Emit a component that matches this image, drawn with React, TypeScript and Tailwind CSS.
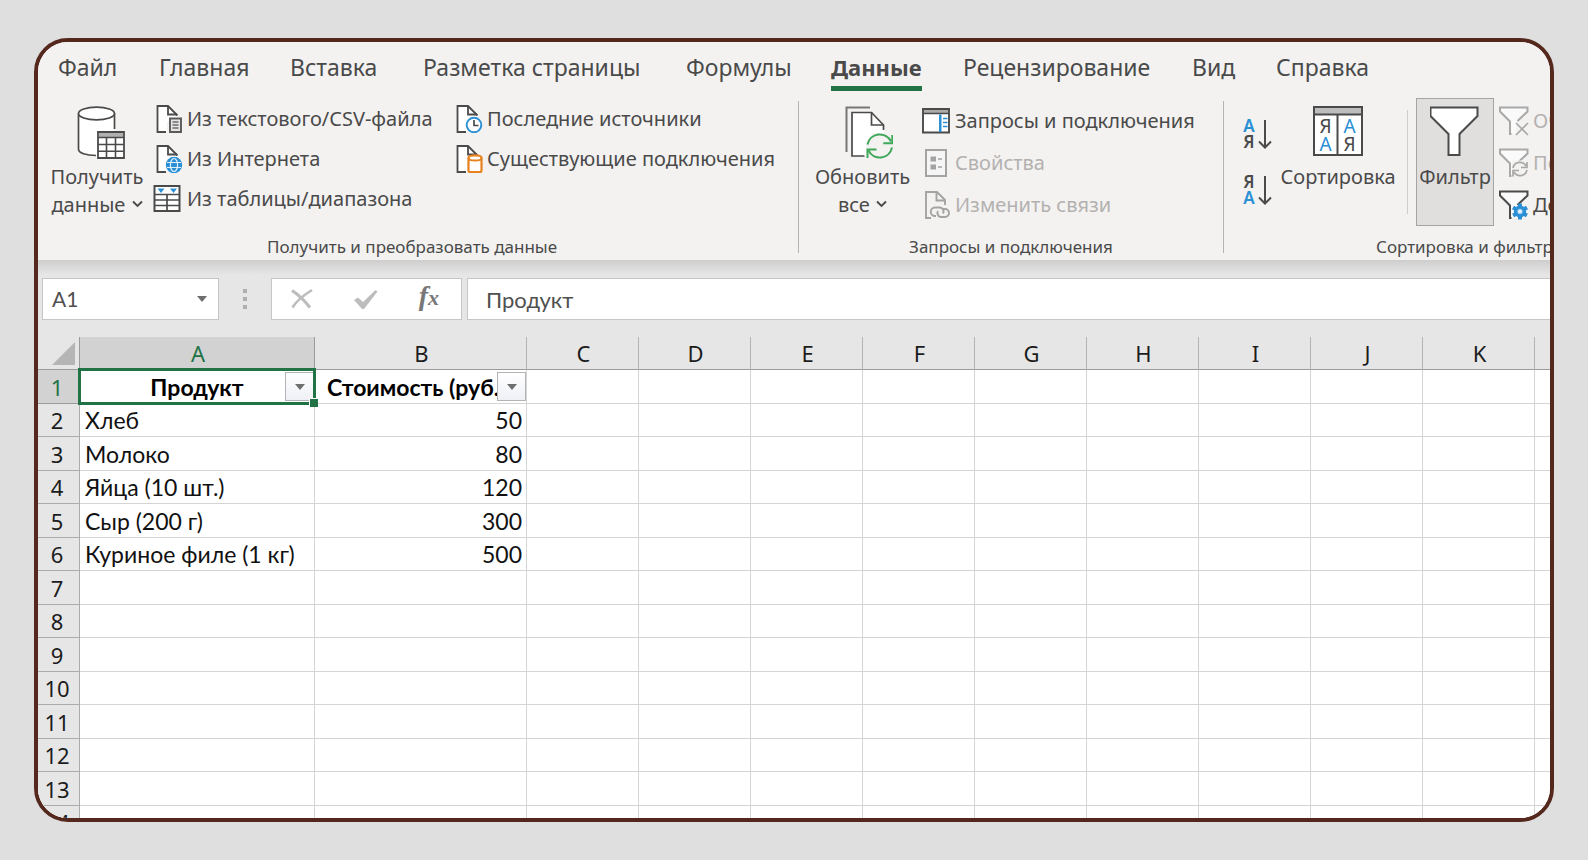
import type { ReactNode } from 'react';

const tabs = [
  { name: 'Файл', width: 'w-[101px]' },
  { name: 'Главная', width: 'w-[131px]' },
  { name: 'Вставка', width: 'w-[133px]' },
  { name: 'Разметка страницы', width: 'w-[263px]' },
  { name: 'Формулы', width: 'w-[145px]' },
  { name: 'Данные', width: 'w-[132px]', active: true },
  { name: 'Рецензирование', width: 'w-[229px]' },
  { name: 'Вид', width: 'w-[84px]' },
  { name: 'Справка', width: 'w-[100px]' },
];

const columns = ['C', 'D', 'E', 'F', 'G', 'H', 'I', 'J', 'K'];

const products: [string, number][] = [
  ['Хлеб', 50],
  ['Молоко', 80],
  ['Яйца (10 шт.)', 120],
  ['Сыр (200 г)', 300],
  ['Куриное филе (1 кг)', 500],
];

const bodyRows = Array.from({ length: 13 }, (_, i) => i + 2);

const DARK = '#4a4a4a';
const BLUE = '#2b8fd6';

function PageShape({ color = DARK }: { color?: string }) {
  return (
    <g fill="none" stroke={color} strokeWidth="1.8">
      <path d="M1.500 1h10l10 10v3H14l-3 4v9H1.500z" fill="#fff" stroke="none" />
      <path d="M10 27H1.500V1h10.500l9.500 9.500" />
      <path d="M12 1v8.500h9" />
    </g>
  );
}

function DatabaseTableIcon() {
  return (
    <svg width="56" height="54" viewBox="-8 0 56 54" fill="none" aria-hidden="true">
      <path d="M1.5 8v36c0 3.5 8 6 17 6h2V26h17V8z" fill="#fff" />
      <path d="M19 49.500C9 49.500 1.500 47 1.500 43V7.500M37.500 7.500V23" stroke={DARK} strokeWidth="1.7" />
      <ellipse cx="19.500" cy="7.500" rx="18" ry="6.300" fill="#fff" stroke={DARK} strokeWidth="1.700" />
      <path d="M21 26h26v26H21z" fill="#fff" stroke={DARK} strokeWidth="1.800" />
      <path d="M22 27h24v4H22z" fill="#b0b0b0" />
      <path d="M21 31.500h26M21 38.500h26M21 45.300h26M29.500 31v21M38.500 31v21" stroke={DARK} strokeWidth="1.600" />
    </svg>
  );
}

function TextFileIcon() {
  return (
    <svg width="28" height="28" viewBox="0 0 28 28" fill="none" aria-hidden="true">
      <PageShape />
      <path d="M14 13.500h11v13.500H14z" fill="#e4e4e4" stroke="#5a5a5a" strokeWidth="1.900" />
      <path d="M16.500 17h6M16.500 20h6M16.500 23h6" stroke="#6c6c6c" strokeWidth="1.400" />
    </svg>
  );
}

function WebFileIcon() {
  return (
    <svg width="28" height="28" viewBox="0 0 28 28" fill="none" aria-hidden="true">
      <PageShape />
      <circle cx="18" cy="20" r="8.200" fill={BLUE} />
      <path d="M11 17.500h14M11 22.500h14" stroke="#e3f1fb" strokeWidth="1.200" />
      <ellipse cx="18" cy="20" rx="3.600" ry="6.500" stroke="#e3f1fb" strokeWidth="1.200" />
    </svg>
  );
}

function TableRangeIcon() {
  return (
    <svg className="overflow-visible" width="28" height="28" viewBox="2 0 28 28" fill="none" aria-hidden="true">
      <path d="M0.500 1h25v25h-25z" fill="#fff" stroke={DARK} strokeWidth="2" />
      <path d="M0.500 9.500h25M0.500 15h25M0.500 20.500h25M13 9v17" stroke={DARK} strokeWidth="1.700" />
      <path d="M3.500 3.500h7L7 8zM16 3.500h7L19.500 8z" fill={BLUE} />
    </svg>
  );
}

function RecentIcon() {
  return (
    <svg width="28" height="28" viewBox="0 0 28 28" fill="none" aria-hidden="true">
      <PageShape />
      <circle cx="18" cy="20" r="7.300" fill="#fff" stroke={BLUE} strokeWidth="1.900" />
      <path d="M18 15v5.500h4.500" stroke={DARK} strokeWidth="1.700" />
    </svg>
  );
}

function ConnectionIcon() {
  return (
    <svg width="28" height="28" viewBox="0 0 28 28" fill="none" aria-hidden="true">
      <PageShape />
      <path d="M12.500 13c0-3.400 13-3.400 13 0v12.500q0 1.500-1.500 1.500h-10q-1.500 0-1.500-1.500z" fill="#fff" stroke="#e8821e" strokeWidth="2.200" />
      <path d="M12.500 13c0 3.400 13 3.400 13 0" stroke="#e8821e" strokeWidth="2" />
    </svg>
  );
}

function RefreshIcon() {
  return (
    <svg width="60" height="54" viewBox="-12 0 60 54" fill="none" aria-hidden="true">
      <path d="M1.500 46V1.500H25" stroke="#777" strokeWidth="2" />
      <path d="M7 7h19l13 13v7H28l-7 9v14H7z" fill="#fff" />
      <path d="M19.500 50H7V6.500h19.500L38.500 19v5" stroke={DARK} strokeWidth="1.700" />
      <path d="M26.500 6.500V19h12.500" stroke={DARK} strokeWidth="1.700" />
      <g stroke="#3fa859" strokeWidth="2">
        <path d="M22.500 38.500a12.500 12.500 0 0 1 23.500-3M47 41.500a12.500 12.500 0 0 1-23.500 3" />
        <path d="M47.300 29v8.300h-9M22.500 52v-8.500h9" />
      </g>
    </svg>
  );
}

function QueriesIcon() {
  return (
    <svg width="28" height="28" viewBox="0 0 28 28" fill="none" aria-hidden="true">
      <path d="M1 2h26v23.500H1z" fill="#fff" stroke={DARK} strokeWidth="1.900" />
      <path d="M2 3h24v3H2z" fill="#aaa" />
      <path d="M1 6.500h26" stroke={DARK} strokeWidth="1.400" />
      <path d="M17 7.500h2.500V25H17z" fill={BLUE} />
      <path d="M21 11.500h4.500M21 15.500h4.500M21 19.500h4.500" stroke={BLUE} strokeWidth="1.700" />
    </svg>
  );
}

function PropertiesIcon() {
  return (
    <svg width="28" height="28" viewBox="0 0 28 28" fill="none" aria-hidden="true">
      <path d="M4 1h20v26H4z" fill="#f5f5f5" stroke="#a3a3a3" strokeWidth="2" />
      <path d="M8.500 7.500h5.500v5H8.500zM8.500 15.500h5.500v5H8.500z" fill="#a3a3a3" />
      <path d="M16 10h4M16 18h4" stroke="#a3a3a3" strokeWidth="1.500" />
    </svg>
  );
}

function EditLinksIcon() {
  return (
    <svg width="28" height="28" viewBox="0 0 28 28" fill="none" aria-hidden="true">
      <g stroke="#a3a3a3" strokeWidth="1.900">
        <path d="M9 27H4V1h11l8 8v5" />
        <path d="M14.500 1v8.500H23" />
        <path d="M14 25h-1a4 4 0 0 1 0-8.500h5a4 4 0 0 1 3 6" />
        <path d="M21 18h2a4 4 0 0 1 0 8h-4.500a4 4 0 0 1-2.500-6" />
      </g>
    </svg>
  );
}

function SortLettersIcon({ reversed = false }: { reversed?: boolean }) {
  return (
    <svg className="overflow-visible" width="30" height="34" viewBox="0 0 30 34" fill="none" aria-hidden="true">
      <g fontFamily="Noto Sans, sans-serif" fontSize="17" fontWeight="600" textAnchor="middle">
        <text x="6" y="15" fill={reversed ? DARK : BLUE}>{reversed ? 'Я' : 'А'}</text>
        <text x="6" y="31" fill={reversed ? BLUE : DARK}>{reversed ? 'А' : 'Я'}</text>
      </g>
      <path d="M22 3v27M16 24.500l6 6 6-6" stroke={DARK} strokeWidth="2" />
    </svg>
  );
}

function SortDialogIcon() {
  return (
    <svg width="50" height="54" viewBox="0 0 50 54" fill="none" aria-hidden="true">
      <path d="M1 1h48v48H1z" fill="#fff" stroke={DARK} strokeWidth="2" />
      <path d="M2 2h46v6H2z" fill="#bdbdbd" />
      <path d="M1 8.500h48M24.500 8.500V49" stroke={DARK} strokeWidth="2" />
      <g fontFamily="Noto Sans, sans-serif" fontSize="19" textAnchor="middle">
        <text x="12.500" y="27" fill={DARK}>Я</text>
        <text x="12.500" y="45" fill={BLUE}>А</text>
        <text x="36.500" y="27" fill={BLUE}>А</text>
        <text x="36.500" y="45" fill={DARK}>Я</text>
      </g>
    </svg>
  );
}

function FilterIcon() {
  return (
    <svg width="50" height="54" viewBox="1 0 50 54" fill="none" aria-hidden="true">
      <path d="M1.500 1.500h47V10L30.500 28v21h-11V28L1.500 10z" fill="#fff" stroke={DARK} strokeWidth="2" />
    </svg>
  );
}

function SmallFunnel({ color, children }: { color: string; children: ReactNode }) {
  return (
    <svg width="30" height="30" viewBox="0 0 30 30" fill="none" aria-hidden="true">
      <path d="M1 1.500h28V5L17 16.500v11h-5v-11L1 5z" fill="#fafafa" />
      <path d="M12.500 28H11V15.500L1 5.500v-4h27.500v4L18.500 15" stroke={color} strokeWidth="2" />
      {children}
    </svg>
  );
}

function ClearFilterIcon() {
  return (
    <SmallFunnel color="#a8a8a8">
      <path d="M17 17l12 12M29 17L17 29" stroke="#a8a8a8" strokeWidth="1.600" />
    </SmallFunnel>
  );
}

function ReapplyIcon() {
  return (
    <SmallFunnel color="#a8a8a8">
      <path d="M13 12.500h16v16H13z" fill="#f3f2f1" />
      <path d="M14 20a7 7 0 0 1 13-2M28 14v5.500h-6M28 22a7 7 0 0 1-13 2M14 28.500V22.500h6" stroke="#a8a8a8" strokeWidth="1.700" />
    </SmallFunnel>
  );
}

function AdvancedIcon() {
  return (
    <SmallFunnel color={DARK}>
      <g stroke={BLUE}>
        <circle cx="21" cy="21.500" r="4.400" strokeWidth="3.400" fill="#9ccbed" />
        <path d="M21 13.500v16M14 17.500l14 8M28 17.500l-14 8" strokeWidth="4" strokeDasharray="4 8" />
      </g>
      <circle cx="21" cy="21.500" r="1.800" fill="#e9f4fc" />
    </SmallFunnel>
  );
}

function Chevron() {
  return (
    <svg className="ml-px inline-block align-[1px]" width="11" height="12" viewBox="0 0 11 12" fill="none" aria-hidden="true">
      <path d="M1 2.500L5.500 7 10 2.500" stroke={DARK} strokeWidth="1.900" />
    </svg>
  );
}

function ArrowDown() {
  return (
    <svg width="10" height="6" viewBox="0 0 10 6" aria-hidden="true">
      <path d="M0 0h10L5 6z" fill="#6e6e6e" />
    </svg>
  );
}

function BigButton({ icon, children, className }: { icon: ReactNode; children: ReactNode; className: string }) {
  return (
    <button type="button" className={`flex shrink-0 flex-col items-center gap-[3px] text-[20px] leading-7 whitespace-nowrap ${className}`}>
      {icon}
      <span>{children}</span>
    </button>
  );
}

function RowButton({ icon, children, className, disabled }: { icon: ReactNode; children: ReactNode; className: string; disabled?: boolean }) {
  return (
    <button type="button" disabled={disabled} className={`flex items-center text-[20px] whitespace-nowrap disabled:text-[#b3b1b0] ${className}`}>
      <span className="shrink-0">{icon}</span>
      {children}
    </button>
  );
}

function Group({ label, className, labelClass, children }: { label: string; className: string; labelClass: string; children: ReactNode }) {
  return (
    <section aria-label={label} className={`flex flex-col ${className}`}>
      <div className="flex h-[143px]">{children}</div>
      <div className={`text-[17px] leading-[26px] whitespace-nowrap ${labelClass}`}>{label}</div>
    </section>
  );
}

function Separator() {
  return <div className="mt-[10px] mb-[7px] w-px shrink-0 bg-[#b5b4b3]" />;
}

function Ribbon() {
  return (
    <header className="shrink-0 bg-[#f3f2f1] text-[#4a4a4a]">
      <nav className="flex h-[49px] pl-5">
        {tabs.map((tab) => (
          <div key={tab.name} className={`shrink-0 ${tab.width}`}>
            <button
              type="button"
              className={
                tab.active
                  ? 'h-[49px] border-b-[5px] border-[#217346] pt-[7px] text-[22px] font-bold whitespace-nowrap'
                  : 'h-[49px] border-b-[5px] border-transparent pt-[7px] text-[23px] whitespace-nowrap'
              }
            >
              {tab.name}
            </button>
          </div>
        ))}
      </nav>
      <div className="flex h-[169px]">
        <Group label="Получить и преобразовать данные" className="w-[760px] shrink-0" labelClass="pl-[229px]">
          <BigButton icon={<DatabaseTableIcon />} className="w-[118px] pt-[15px]">
            Получить
            <br />
            данные <Chevron />
          </BigButton>
          <div className="w-[300px] pt-2">
            <RowButton icon={<TextFileIcon />} className="h-10 gap-[3px]">Из текстового/CSV-файла</RowButton>
            <RowButton icon={<WebFileIcon />} className="h-10 gap-[3px]">Из Интернета</RowButton>
            <RowButton icon={<TableRangeIcon />} className="h-10 gap-[3px]">Из таблицы/диапазона</RowButton>
          </div>
          <div className="pt-2">
            <RowButton icon={<RecentIcon />} className="h-10 gap-[3px]">Последние источники</RowButton>
            <RowButton icon={<ConnectionIcon />} className="h-10 gap-[3px]">Существующие подключения</RowButton>
          </div>
        </Group>
        <Separator />
        <Group label="Запросы и подключения" className="w-[424px] shrink-0" labelClass="text-center">
          <BigButton icon={<RefreshIcon />} className="ml-1 w-[119px] pt-[15px]">
            Обновить
            <br />
            все <Chevron />
          </BigButton>
          <div className="pt-[9px]">
            <RowButton icon={<QueriesIcon />} className="h-[42px] gap-[5px]">Запросы и подключения</RowButton>
            <RowButton icon={<PropertiesIcon />} className="h-[42px] gap-[5px]" disabled>Свойства</RowButton>
            <RowButton icon={<EditLinksIcon />} className="h-[42px] gap-[5px]" disabled>Изменить связи</RowButton>
          </div>
        </Group>
        <Separator />
        <Group label="Сортировка и фильтр" className="min-w-0 flex-1" labelClass="pl-[152px]">
          <div className="ml-[19px] flex w-8 shrink-0 flex-col gap-[22px] pt-[26px]">
            <button type="button" aria-label="Сортировка от А до Я"><SortLettersIcon /></button>
            <button type="button" aria-label="Сортировка от Я до А"><SortLettersIcon reversed /></button>
          </div>
          <BigButton icon={<SortDialogIcon />} className="w-[126px] pt-[15px]">Сортировка</BigButton>
          <div className="mt-[19px] mb-5 ml-[6px] w-px shrink-0 bg-[#cfcecd]" />
          <BigButton icon={<FilterIcon />} className="mt-[7px] ml-2 h-[128px] w-[78px] border border-[#a5a4a3] bg-[#e0dfde] pt-[7px]">Фильтр</BigButton>
          <div className="ml-[5px] pt-[9px]">
            <RowButton icon={<ClearFilterIcon />} className="h-[42px] gap-1" disabled>Очистить</RowButton>
            <RowButton icon={<ReapplyIcon />} className="h-[42px] gap-1" disabled>Повторить</RowButton>
            <RowButton icon={<AdvancedIcon />} className="h-[42px] gap-1">Дополнительно</RowButton>
          </div>
        </Group>
      </div>
    </header>
  );
}

function FormulaBar() {
  return (
    <div className="flex h-[77px] shrink-0 flex-col bg-[#e6e6e6]">
      <div className="h-[15px] shrink-0 bg-linear-to-b from-[#cfcece] to-[#e6e6e6]" />
      <div className="mt-[3px] ml-1 flex h-[42px] font-[Lato,'Noto_Sans',sans-serif] text-[22px] text-[#505050]">
        <label className="flex w-[177px] shrink-0 items-center border border-[#c6c6c6] bg-white pr-[11px] pl-[9px]">
          <input aria-label="Имя ячейки" defaultValue="A1" className="min-w-0 flex-1 text-[21px] outline-none" />
          <ArrowDown />
        </label>
        <div className="flex w-[52px] shrink-0 flex-col items-center justify-center gap-1">
          <span className="size-[4px] bg-[#b0b0b0]" />
          <span className="size-[4px] bg-[#b0b0b0]" />
          <span className="size-[4px] bg-[#b0b0b0]" />
        </div>
        <div className="mr-[5px] flex w-[191px] shrink-0 items-center justify-between border border-[#c6c6c6] bg-white pr-[22px] pl-[18px]">
          <button type="button" aria-label="Отмена">
            <svg width="24" height="24" viewBox="0 0 24 24" fill="none" stroke="#bdbdbd" aria-hidden="true">
              <path d="M2 3.500C9 8 14 13 20 20.500" strokeWidth="3.200" />
              <path d="M22 3C14 8 7 13 2.500 20.500" strokeWidth="2.600" />
            </svg>
          </button>
          <button type="button" aria-label="Ввод">
            <svg width="24" height="24" viewBox="0 0 24 24" fill="#bdbdbd" aria-hidden="true">
              <path d="M0 13l4-2.500 5 4.500L21.500 3l2 1.500L10 22H8z" />
            </svg>
          </button>
          <button type="button" aria-label="Вставить функцию" className="pb-1 font-['Liberation_Serif',serif] text-[28px] leading-8 font-bold text-[#777] italic">
            f<span className="text-[22px]">x</span>
          </button>
        </div>
        <input aria-label="Строка формул" defaultValue="Продукт" className="min-w-0 flex-1 border border-r-0 border-[#c6c6c6] bg-white pl-[18px] outline-none" />
      </div>
    </div>
  );
}

function FilterButton({ label }: { label: string }) {
  return (
    <button type="button" aria-label={label} className="absolute right-0 bottom-[2px] flex h-[29px] w-[29px] items-center justify-center border border-[#b4b4b8] bg-linear-to-b from-white to-[#eef0f5]">
      <ArrowDown />
    </button>
  );
}

function HeaderCell({ children, selected }: { children?: ReactNode; selected?: boolean }) {
  return (
    <th
      scope="col"
      className={
        selected
          ? 'h-[33px] border-r border-b border-[#9b9b9b] bg-[#d2d2d2] p-0 pl-[2px] font-normal text-[#217346]'
          : 'h-[33px] border-r border-b border-[#9b9b9b] border-r-[#b4b4b4] bg-[#e6e6e6] p-0 pl-[2px] font-normal'
      }
    >
      {children}
    </th>
  );
}

const cell = 'border-r border-b border-[#d4d4d4] p-0';

function Sheet() {
  return (
    <main className="min-h-0 flex-1 overflow-hidden bg-white">
      <table className="w-full table-fixed border-separate border-spacing-0 text-[22px] leading-7 text-[#1c1c1c]">
        <colgroup>
          <col className="w-[42px]" />
          <col className="w-[235px]" />
          <col className="w-[212px]" />
          {columns.map((c) => (
            <col key={c} className="w-[112px]" />
          ))}
          <col />
        </colgroup>
        <thead>
          <tr>
            <th aria-label="Выделить всё" className="border-r border-b border-[#9b9b9b] bg-[#e6e6e6] p-0">
              <svg className="ml-auto mr-[4px]" width="23" height="23" viewBox="0 0 23 23" aria-hidden="true">
                <path d="M23 0v23H0z" fill="#b5b5b5" />
              </svg>
            </th>
            <HeaderCell selected>A</HeaderCell>
            <HeaderCell>B</HeaderCell>
            {columns.map((c) => (
              <HeaderCell key={c}>{c}</HeaderCell>
            ))}
            <td className="border-b border-[#9b9b9b] bg-[#e6e6e6]" />
          </tr>
        </thead>
        <tbody className="text-[23px]">
          <tr>
            <th scope="row" className="h-[34px] border-r border-b border-[#9b9b9b] bg-[#d2d2d2] p-0 pr-[3px] text-[22px] font-normal text-[#217346]">1</th>
            <td className={`relative text-center font-[Lato,'Noto_Sans',sans-serif] font-bold text-black ${cell}`}>
              Продукт
              <FilterButton label="Фильтр: Продукт" />
              <div className="pointer-events-none absolute -top-[2px] -right-[2px] -bottom-[2px] -left-[2px] border-[3px] border-[#217346]" />
              <div className="absolute -right-[4px] -bottom-[4px] z-10 size-[9px] border-t border-l border-white bg-[#217346]" />
            </td>
            <td className={`relative text-left font-[Lato,'Noto_Sans',sans-serif] font-bold whitespace-nowrap text-black ${cell}`}>
              <span className="block overflow-hidden pl-3">Стоимость (руб.)</span>
              <FilterButton label="Фильтр: Стоимость" />
            </td>
            {columns.map((c) => (
              <td key={c} className={cell} />
            ))}
            <td className="border-b border-[#d4d4d4]" />
          </tr>
          {bodyRows.map((n) => (
            <tr key={n} className="h-[33px] odd:h-[34px]">
              <th scope="row" className="border-r border-b border-[#ababab] bg-[#e6e6e6] p-0 pr-[3px] text-[22px] font-normal">{n}</th>
              <td className="border-r border-b border-[#d4d4d4] p-0 pl-[5px] font-[Lato,'Noto_Sans',sans-serif] whitespace-nowrap text-[#111]">
                {products[n - 2]?.[0]}
              </td>
              <td className="border-r border-b border-[#d4d4d4] p-0 pr-1 text-right font-[Lato,'Noto_Sans',sans-serif] text-[#111]">
                {products[n - 2]?.[1]}
              </td>
              {columns.map((c) => (
                <td key={c} className={cell} />
              ))}
              <td className="border-b border-[#d4d4d4]" />
            </tr>
          ))}
        </tbody>
      </table>
    </main>
  );
}

export default function App() {
  return (
    <div className="flex h-screen bg-[#dfdfdf] px-[34px] py-[38px] font-['Noto_Sans',sans-serif]">
      <div className="flex min-w-0 flex-1 flex-col overflow-hidden rounded-[34px] border-4 border-[#54281d] bg-white">
        <Ribbon />
        <FormulaBar />
        <Sheet />
      </div>
    </div>
  );
}
